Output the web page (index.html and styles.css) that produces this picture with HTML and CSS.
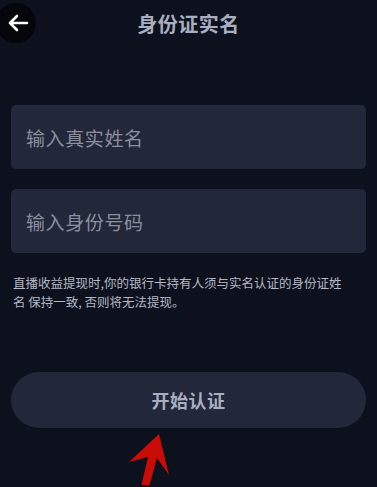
FILE: index.html
```html
<!DOCTYPE html>
<html lang="zh-CN">
<head>
    <meta charset="UTF-8">
    <meta name="viewport" content="width=device-width, initial-scale=1.0">
    <title>身份证实名</title>
    <link rel="stylesheet" href="styles.css">
</head>
<body>

<div class="page">
    <header class="topbar">
        <button class="back" aria-label="返回">
            <svg width="22" height="18" viewBox="0 0 22 18">
                <path d="M10 2 L3 9 L10 16 M3 9 H20" fill="none" stroke="#ffffff" stroke-width="2.6" stroke-linecap="round" stroke-linejoin="round"/>
            </svg>
        </button>
        <h1>身份证实名</h1>
        <span></span>
    </header>

    <div class="content">
        <!-- 输入框 -->
        <div class="field">
            <input type="text" id="realname" placeholder="输入真实姓名">
        </div>
        <div class="field">
            <input type="text" id="idcard" placeholder="输入身份号码">
        </div>

        <p class="note">直播收益提现时,你的银行卡持有人须与实名认证的身份证姓<br>名 保持一致, 否则将无法提现。</p>

        <button class="submit">开始认证</button>
    </div>

    <!-- 红色箭头标注 -->
    <svg class="pointer" width="60" height="60" viewBox="0 0 60 60">
        <polygon points="39,9 49,50 37,33 29,62 21,62 28,32 9,37" fill="#c90c06"/>
    </svg>
</div>

</body>
</html>
```

FILE: styles.css
```css
body {
    margin: 0;
    padding: 0;
    background-color: #0d111d;
    font-family: 'Noto Sans CJK SC', 'Noto Sans', sans-serif;
}

.page {
    position: relative;
    width: 377px;
    height: 487px;
    overflow: hidden;
    background-color: #0d111d;
}

.topbar {
    display: grid;
    grid-template-columns: 44px 1fr 44px;
    align-items: center;
    height: 46px;
}

.back {
    width: 40px;
    height: 40px;
    margin-left: -4px;
    border: none;
    border-radius: 50%;
    background-color: #04060b;
    display: flex;
    align-items: center;
    justify-content: center;
    padding: 0 0 0 4px;
}

h1 {
    margin: 0;
    text-align: center;
    font-size: 20px;
    font-weight: bold;
    color: #a8aec0;
    letter-spacing: 0.5px;
}

.content {
    padding: 59px 11px 0;
}

.field {
    margin-bottom: 20px;
}

input[type="text"] {
    box-sizing: border-box;
    width: 100%;
    height: 64px;
    padding: 0 15px;
    background-color: #222739;
    border: none;
    border-radius: 5px;
    font-family: inherit;
    font-size: 19px;
    letter-spacing: 0.6px;
    color: #c9ccd6;
    outline: none;
}

input::placeholder {
    color: #8a8f9f;
}

.note {
    margin: 5px 0 0 2px;
    font-size: 12.5px;
    line-height: 19px;
    color: #b4b8c4;
}

.submit {
    display: block;
    width: 100%;
    height: 56px;
    margin-top: 61px;
    border: none;
    border-radius: 28px;
    background-color: #222739;
    font-family: inherit;
    font-size: 18px;
    font-weight: bold;
    letter-spacing: 0.5px;
    color: #a8aec0;
    cursor: pointer;
}

.pointer {
    position: absolute;
    left: 120px;
    top: 425px;
}
```
